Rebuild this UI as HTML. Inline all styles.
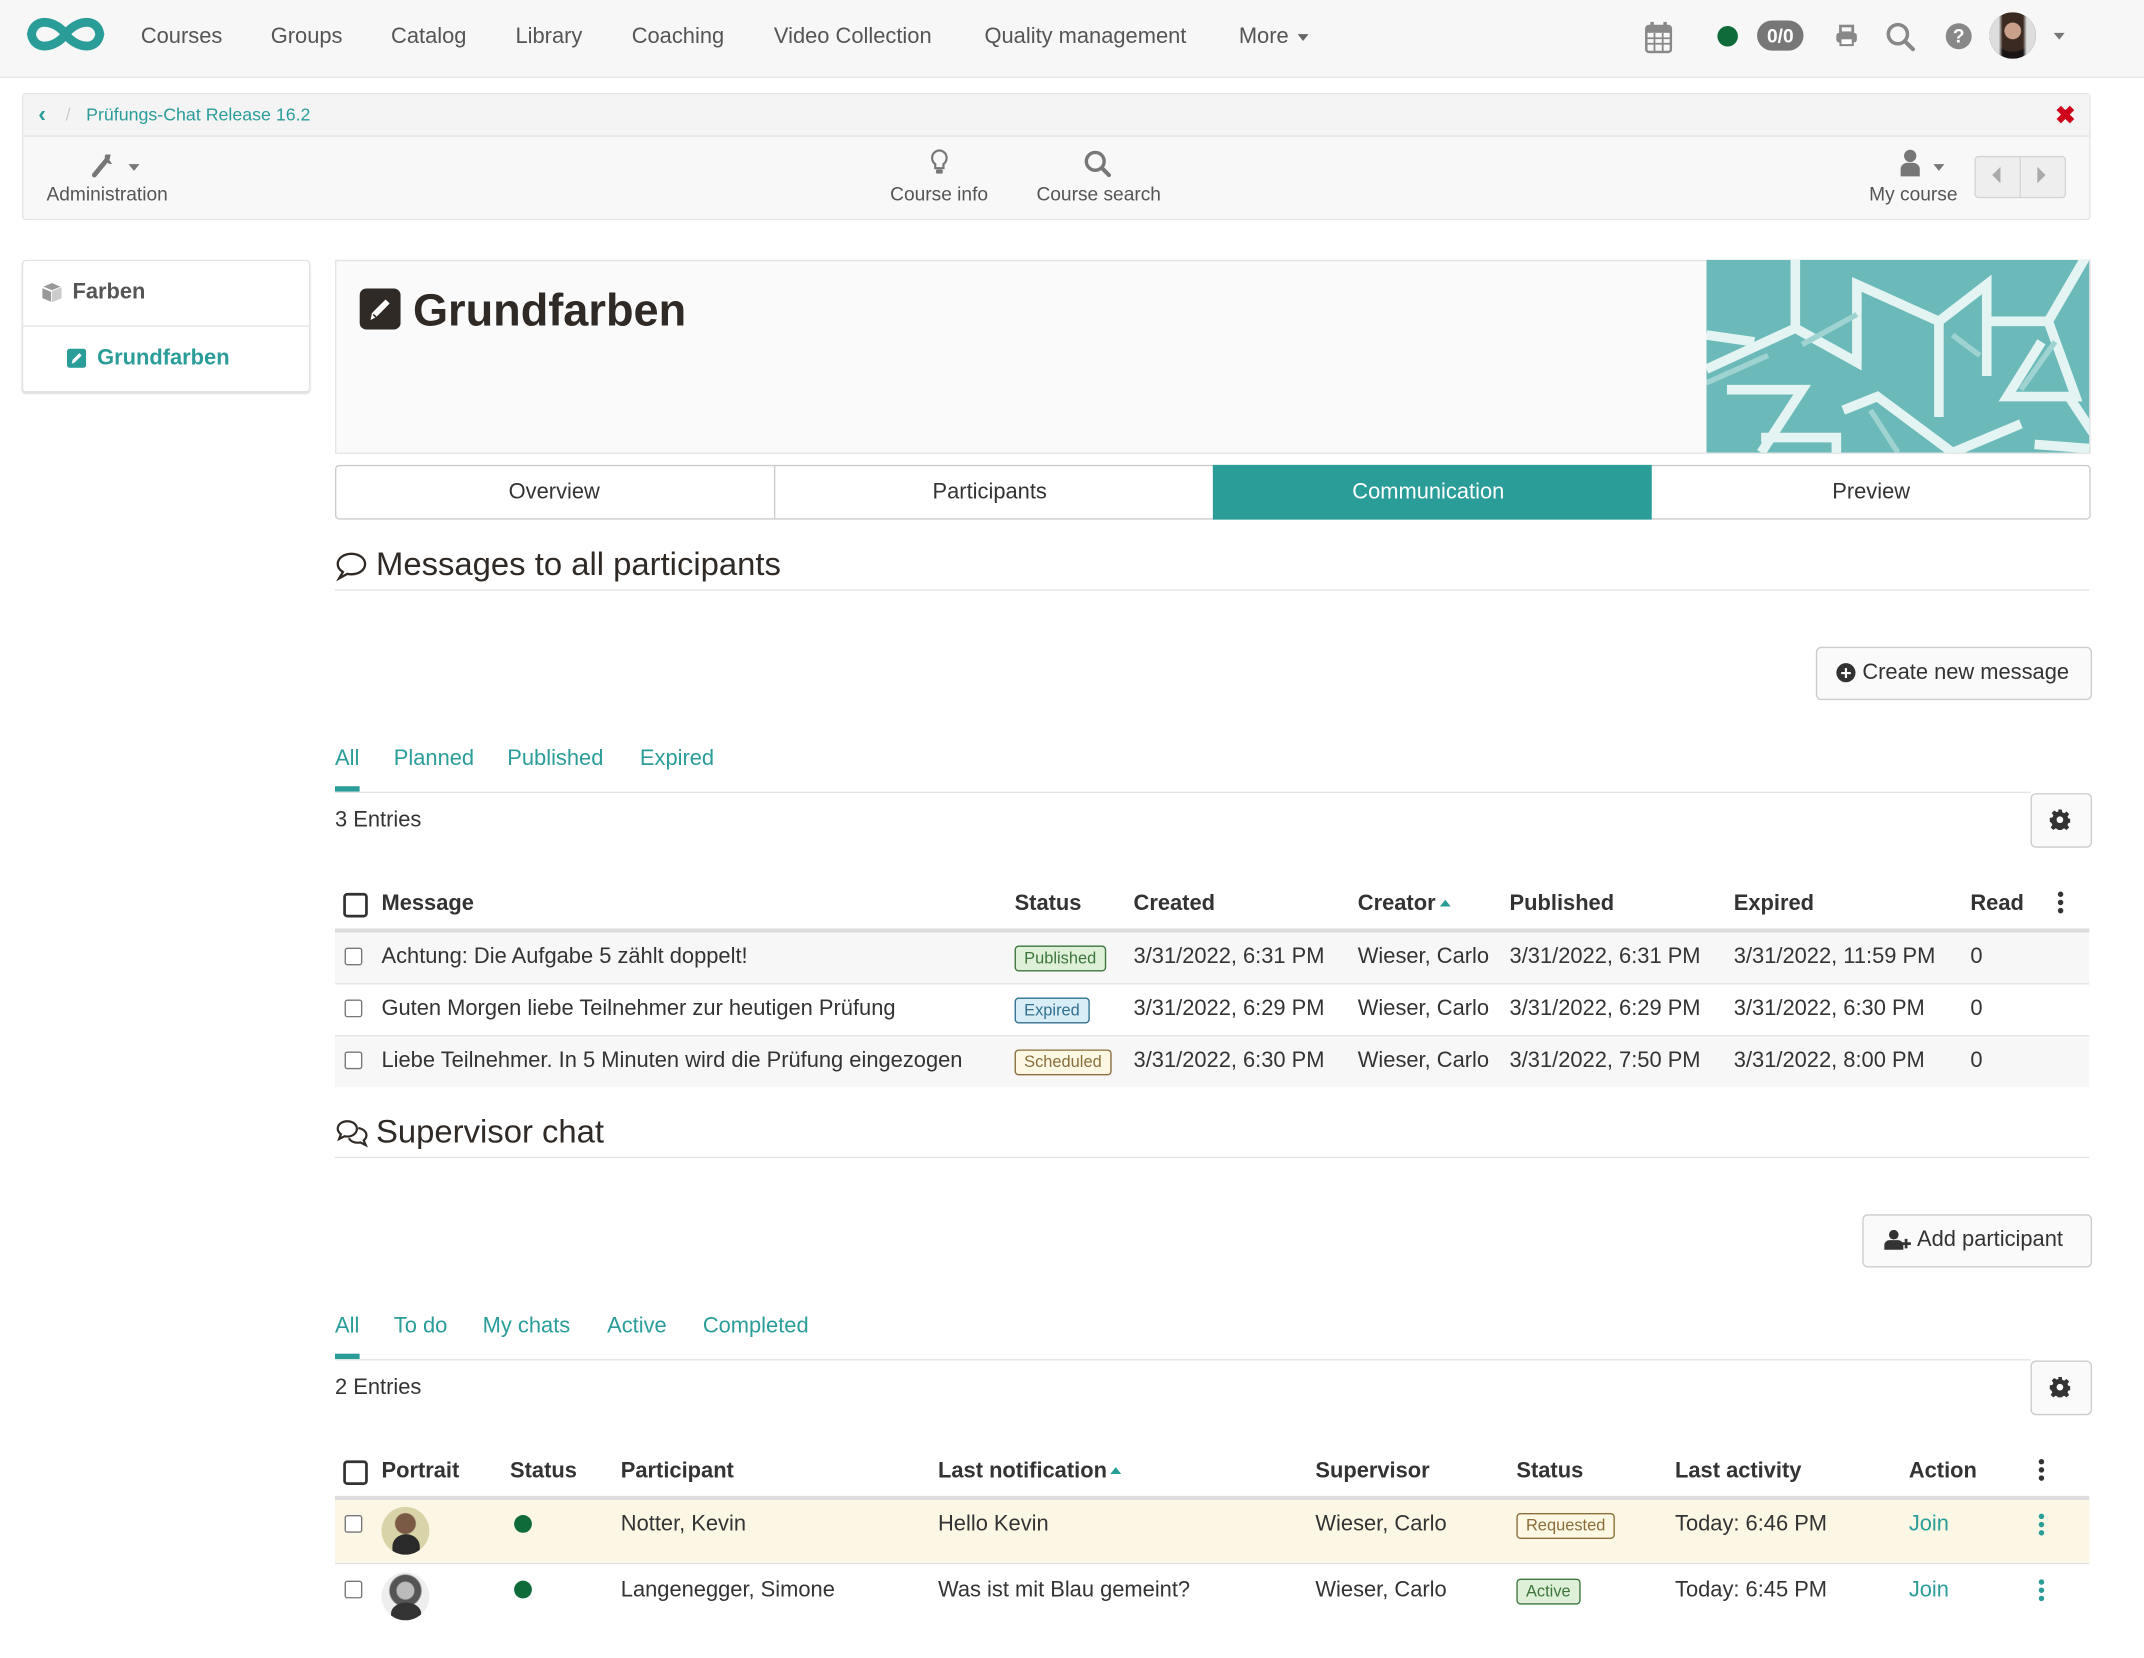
<!DOCTYPE html>
<html><head><meta charset="utf-8">
<style>
html,body{margin:0;padding:0;background:#fff;overflow:hidden}
body{width:2144px;height:1658px;position:relative}
#w{position:absolute;left:0;top:0;width:1568px;height:1213px;transform:scale(1.36735);transform-origin:0 0;font-family:"Liberation Sans",sans-serif;color:#333}
.a{position:absolute}
.t{position:absolute;transform:translateY(-50%);white-space:nowrap;line-height:1.2}
.nav{font-size:16px;color:#555}
.teal{color:#2a9d99}
.b{font-weight:bold}
.f16{font-size:16px}
.cb{position:absolute;width:11px;height:11px;border:1.5px solid #777;border-radius:2px;background:#fff}
.cbh{position:absolute;width:14px;height:14px;border:2px solid #333;border-radius:3px;background:#fff}
.lbl{position:absolute;font-size:12px;border:1px solid;border-radius:3px;padding:1px 6px;transform:translateY(-50%);line-height:15px}
.hr{position:absolute;height:1px;background:#e3e3e3}
.btn{position:absolute;border:1px solid #ccc;border-radius:4px;background:#fafafa}
</style></head><body><div id="w">

<!-- top bar -->
<div class="a" style="left:0;top:0;width:1568px;height:56px;background:#f7f7f7;border-bottom:1px solid #e5e5e5"></div>
<svg class="a" style="left:17px;top:9px" width="62" height="32" viewBox="0 0 62 32"><path d="M31 16 C24 6 8 3 6 16 C8 29 24 26 31 16 C38 6 54 3 56 16 C54 29 38 26 31 16Z" fill="none" stroke="#2a9d99" stroke-width="6.5"/></svg>
<span class="t nav" style="left:103px;top:27px">Courses</span>
<span class="t nav" style="left:198px;top:27px">Groups</span>
<span class="t nav" style="left:286px;top:27px">Catalog</span>
<span class="t nav" style="left:377px;top:27px">Library</span>
<span class="t nav" style="left:462px;top:27px">Coaching</span>
<span class="t nav" style="left:566px;top:27px">Video Collection</span>
<span class="t nav" style="left:720px;top:27px">Quality management</span>
<span class="t nav" style="left:906px;top:27px">More</span>
<div class="a" style="left:949px;top:25px;border:4.5px solid transparent;border-top:5px solid #666;border-bottom:0"></div>
<svg class="a" style="left:1203px;top:15px" width="20" height="24" viewBox="0 0 20 24"><rect x="1" y="4" width="18" height="19" rx="2" fill="none" stroke="#888" stroke-width="1.8"/><rect x="1" y="4" width="18" height="5" fill="#888"/><rect x="4" y="1" width="2.5" height="5" fill="#888"/><rect x="13.5" y="1" width="2.5" height="5" fill="#888"/><path d="M1 13H19M1 17H19M7 9V23M13 9V23" stroke="#888" stroke-width="1.3"/></svg>
<div class="a" style="left:1256px;top:19px;width:15px;height:15px;border-radius:50%;background:#0f6b3a"></div>
<div class="a" style="left:1285px;top:15px;width:34px;height:22px;border-radius:11px;background:#777;color:#fff;font-weight:bold;font-size:14px;text-align:center;line-height:22px">0/0</div>
<svg class="a" style="left:1342px;top:18px" width="17" height="16" viewBox="0 0 17 16"><rect x="4" y="1" width="9" height="5" fill="none" stroke="#888" stroke-width="2"/><rect x="1" y="6" width="15" height="7" rx="2" fill="#888"/><rect x="4" y="10" width="9" height="5" fill="#fff" stroke="#888" stroke-width="1.5"/></svg>
<svg class="a" style="left:1379px;top:16px" width="22" height="22" viewBox="0 0 22 22"><circle cx="9" cy="9" r="7" fill="none" stroke="#888" stroke-width="2.6"/><path d="M14 14L20 20" stroke="#888" stroke-width="3" stroke-linecap="round"/></svg>
<div class="a" style="left:1423px;top:17px;width:19px;height:19px;border-radius:50%;background:#888;color:#fff;font-weight:bold;font-size:14px;text-align:center;line-height:19px">?</div>
<div class="a" style="left:1455px;top:9px;width:34px;height:34px;border-radius:50%;background:radial-gradient(circle at 50% 40%,#c9a089 0 22%,#3a2a22 24% 55%,#1a1414 60%),#ddd;overflow:hidden"><div class="a" style="left:0;top:0;width:34px;height:34px;background:linear-gradient(90deg,#ddd 0 20%,transparent 28% 72%,#ddd 80%)"></div></div>
<div class="a" style="left:1502px;top:24px;border:4.5px solid transparent;border-top:5px solid #777;border-bottom:0"></div>

<!-- course toolbar -->
<div class="a" style="left:16px;top:68px;width:1511px;height:91px;border:1px solid #e5e5e5;border-radius:3px;background:#f8f8f8"></div>
<div class="a" style="left:17px;top:69px;width:1511px;height:30px;background:#f4f4f4;border-bottom:1px solid #e3e3e3"></div>
<span class="t teal b" style="left:28px;top:84px;font-size:17px">&#8249;</span>
<span class="t" style="left:48px;top:84px;font-size:13px;color:#ccc">/</span>
<span class="t teal" style="left:63px;top:84px;font-size:13px">Prüfungs-Chat Release 16.2</span>
<span class="t b" style="left:1503px;top:85px;font-size:18px;color:#d0021b">&#10006;</span>
<svg class="a" style="left:66px;top:109px" width="22" height="22" viewBox="0 0 22 22"><path d="M3 19L12 8" stroke="#777" stroke-width="3.5" stroke-linecap="round"/><path d="M11 4a5 5 0 0 0 5 7l-2-3 1-4z" fill="#777"/></svg>
<div class="a" style="left:94px;top:120px;border:4px solid transparent;border-top:5px solid #777;border-bottom:0"></div>
<span class="t" style="left:34px;top:142px;font-size:14px;color:#555">Administration</span>
<svg class="a" style="left:680px;top:109px" width="14" height="20" viewBox="0 0 14 20"><path d="M7 1a5.5 5.5 0 0 0-3 10v3h6v-3a5.5 5.5 0 0 0-3-10z" fill="none" stroke="#777" stroke-width="1.6"/><rect x="4.5" y="15" width="5" height="3" rx="1" fill="#777"/></svg>
<span class="t" style="left:651px;top:142px;font-size:14px;color:#555">Course info</span>
<svg class="a" style="left:792px;top:109px" width="22" height="22" viewBox="0 0 22 22"><circle cx="9" cy="9" r="6.5" fill="none" stroke="#777" stroke-width="2.5"/><path d="M14 14L19 19" stroke="#777" stroke-width="3" stroke-linecap="round"/></svg>
<span class="t" style="left:758px;top:142px;font-size:14px;color:#555">Course search</span>
<svg class="a" style="left:1388px;top:109px" width="18" height="22" viewBox="0 0 18 22"><circle cx="9" cy="5" r="4.5" fill="#777"/><path d="M2 20V14a5 5 0 0 1 5-4h4a5 5 0 0 1 5 4v6z" fill="#777"/></svg>
<div class="a" style="left:1414px;top:120px;border:4px solid transparent;border-top:5px solid #777;border-bottom:0"></div>
<span class="t" style="left:1367px;top:142px;font-size:14px;color:#555">My course</span>
<div class="a" style="left:1444px;top:114px;width:65px;height:29px;border:1px solid #d5d5d5;border-radius:3px;background:#eee"></div>
<div class="a" style="left:1477px;top:115px;width:1px;height:29px;background:#d5d5d5"></div>
<div class="a" style="left:1457px;top:122px;border:6px solid transparent;border-right:6px solid #aaa;border-left:0"></div>
<div class="a" style="left:1490px;top:122px;border:6px solid transparent;border-left:6px solid #aaa;border-right:0"></div>

<!-- left menu -->
<div class="a" style="left:16px;top:190px;width:209px;height:95px;border:1px solid #e3e3e3;border-radius:3px;box-shadow:0 1px 1px #ddd"></div>
<div class="hr" style="left:17px;top:238px;width:209px"></div>
<svg class="a" style="left:30px;top:206px" width="16" height="16" viewBox="0 0 16 16"><path d="M8 1L15 4V12L8 15L1 12V4Z" fill="#999"/><path d="M8 7V15M1 4L8 7L15 4" stroke="#fff" stroke-width="1.3" fill="none"/><path d="M8 7L15 4V12L8 15Z" fill="#ccc"/></svg>
<span class="t b" style="left:53px;top:214px;font-size:16px;color:#555">Farben</span>
<svg class="a" style="left:49px;top:255px" width="14" height="14" viewBox="0 0 14 14"><rect width="14" height="14" rx="2" fill="#2a9d99"/><path d="M3.5 11l.6-2.8L9 3.3l1.7 1.7-4.9 4.9z" fill="#fff"/></svg>
<span class="t b teal" style="left:71px;top:262px;font-size:16px">Grundfarben</span>

<!-- header -->
<div class="a" style="left:245px;top:190px;width:1282px;height:140px;border:1px solid #e5e5e5;background:#fafafa"></div>
<svg class="a" style="left:263px;top:211px" width="30" height="30" viewBox="0 0 30 30"><rect width="30" height="30" rx="5" fill="#2f2a26"/><path d="M8 23l1-5L19 8l3 3L12 21z" fill="#fff"/><path d="M10 19l2 2" stroke="#2f2a26" stroke-width="1.2"/></svg>
<span class="t b" style="left:302px;top:227px;font-size:33px;color:#2f2a26">Grundfarben</span>
<svg class="a" style="left:1248px;top:190px" width="280" height="141" viewBox="0 0 280 141"><rect width="280" height="141" fill="#6bbab9"/>
<g fill="none" stroke="#e4f4f3" stroke-width="7" stroke-linejoin="miter">
<path d="M65 0V50L0 80"/><path d="M65 50L110 75V18L170 45V115"/><path d="M170 45L205 18V85"/><path d="M205 45H250L282 -10"/><path d="M250 45L270 100H220L245 60"/><path d="M265 100L285 130"/><path d="M35 60L0 55"/><path d="M15 95H70L40 141"/><path d="M40 130H95V141"/><path d="M100 110L125 100L180 141"/><path d="M180 141L230 120"/><path d="M240 135L280 138"/></g>
<g fill="none" stroke="#9fd3d1" stroke-width="4"><path d="M70 62L110 40M180 55L200 70M120 110L140 141M255 60L230 95M0 90L45 70"/></g></svg>

<!-- tabs -->
<div class="a" style="left:245px;top:340px;width:1282px;height:38px;border:1px solid #ccc;border-radius:3px;background:#fff"></div>
<div class="a" style="left:566px;top:340px;width:1px;height:40px;background:#ccc"></div>
<div class="a" style="left:887px;top:340px;width:321px;height:40px;background:#2a9d99"></div>
<span class="t f16" style="left:372px;top:360px">Overview</span>
<span class="t f16" style="left:682px;top:360px">Participants</span>
<span class="t f16" style="left:989px;top:360px;color:#fff">Communication</span>
<span class="t f16" style="left:1340px;top:360px">Preview</span>

<!-- messages -->
<svg class="a" style="left:245px;top:403px" width="24" height="22" viewBox="0 0 24 22"><path d="M12 2C6 2 2 5.5 2 9.5c0 2.5 1.5 4.5 3.8 5.8L3 20l6-3.3c1 .2 2 .3 3 .3 6 0 10-3.5 10-7.5S18 2 12 2z" fill="none" stroke="#2f2a26" stroke-width="1.7"/></svg>
<span class="t" style="left:275px;top:414px;font-size:24px;color:#2f2a26">Messages to all participants</span>
<div class="hr" style="left:245px;top:431px;width:1283px"></div>
<div class="btn" style="left:1328px;top:473px;width:200px;height:37px"></div>
<div class="a" style="left:1343px;top:485px;width:14px;height:14px;border-radius:50%;background:#333;color:#fff;font-size:14px;font-weight:bold;text-align:center;line-height:14px">+</div>
<span class="t f16" style="left:1362px;top:492px">Create new message</span>

<span class="t f16 teal" style="left:245px;top:555px">All</span>
<span class="t f16 teal" style="left:288px;top:555px">Planned</span>
<span class="t f16 teal" style="left:371px;top:555px">Published</span>
<span class="t f16 teal" style="left:468px;top:555px">Expired</span>
<div class="a" style="left:245px;top:575px;width:18px;height:4px;background:#2a9d99"></div>
<div class="hr" style="left:245px;top:579px;width:1240px"></div>
<span class="t f16" style="left:245px;top:600px">3 Entries</span>
<div class="btn" style="left:1485px;top:580px;width:43px;height:38px"></div>
<svg class="a" style="left:1499px;top:592px" width="15" height="15" viewBox="0 0 16 16"><path d="M6.6 0h2.8l.4 2.2 1.5.7 1.9-1.3 2 2-1.3 1.9.7 1.5 2.2.4v2.8l-2.2.4-.7 1.5 1.3 1.9-2 2-1.9-1.3-1.5.7-.4 2.2H6.6l-.4-2.2-1.5-.7-1.9 1.3-2-2 1.3-1.9-.7-1.5L0 9.4V6.6l2.2-.4.7-1.5-1.3-1.9 2-2 1.9 1.3 1.5-.7z" fill="#333"/><circle cx="8" cy="8" r="2.6" fill="#fafafa"/></svg>

<div class="cbh" style="left:251px;top:653px"></div>
<span class="t f16 b" style="left:279px;top:661px">Message</span>
<span class="t f16 b" style="left:742px;top:661px">Status</span>
<span class="t f16 b" style="left:829px;top:661px">Created</span>
<span class="t f16 b" style="left:993px;top:661px">Creator</span>
<div class="a" style="left:1053px;top:658px;border:4.5px solid transparent;border-bottom:5px solid #2a9d99;border-top:0"></div>
<span class="t f16 b" style="left:1104px;top:661px">Published</span>
<span class="t f16 b" style="left:1268px;top:661px">Expired</span>
<span class="t f16 b" style="left:1441px;top:661px">Read</span>
<div class="a" style="left:1505px;top:652px;width:4px;height:4px;border-radius:50%;background:#333;box-shadow:0 6px 0 #333,0 12px 0 #333"></div>
<div class="a" style="left:245px;top:679px;width:1283px;height:3px;background:#ddd"></div>
<div class="a" style="left:245px;top:682px;width:1283px;height:37px;background:#f7f7f7"></div>
<div class="hr" style="left:245px;top:719px;width:1283px"></div>
<div class="hr" style="left:245px;top:757px;width:1283px"></div>
<div class="a" style="left:245px;top:758px;width:1283px;height:37px;background:#f7f7f7"></div>

<div class="cb" style="left:252px;top:693px"></div>
<span class="t f16" style="left:279px;top:700px">Achtung: Die Aufgabe 5 zählt doppelt!</span>
<span class="lbl" style="left:742px;top:701px;color:#3c763d;border-color:#3c763d;background:#dff0d8">Published</span>
<span class="t f16" style="left:829px;top:700px">3/31/2022, 6:31 PM</span>
<span class="t f16" style="left:993px;top:700px">Wieser, Carlo</span>
<span class="t f16" style="left:1104px;top:700px">3/31/2022, 6:31 PM</span>
<span class="t f16" style="left:1268px;top:700px">3/31/2022, 11:59 PM</span>
<span class="t f16" style="left:1441px;top:700px">0</span>

<div class="cb" style="left:252px;top:731px"></div>
<span class="t f16" style="left:279px;top:738px">Guten Morgen liebe Teilnehmer zur heutigen Prüfung</span>
<span class="lbl" style="left:742px;top:739px;color:#31708f;border-color:#31708f;background:#d9edf7">Expired</span>
<span class="t f16" style="left:829px;top:738px">3/31/2022, 6:29 PM</span>
<span class="t f16" style="left:993px;top:738px">Wieser, Carlo</span>
<span class="t f16" style="left:1104px;top:738px">3/31/2022, 6:29 PM</span>
<span class="t f16" style="left:1268px;top:738px">3/31/2022, 6:30 PM</span>
<span class="t f16" style="left:1441px;top:738px">0</span>

<div class="cb" style="left:252px;top:769px"></div>
<span class="t f16" style="left:279px;top:776px">Liebe Teilnehmer. In 5 Minuten wird die Prüfung eingezogen</span>
<span class="lbl" style="left:742px;top:777px;color:#8a6d3b;border-color:#8a6d3b;background:#fcf8e3">Scheduled</span>
<span class="t f16" style="left:829px;top:776px">3/31/2022, 6:30 PM</span>
<span class="t f16" style="left:993px;top:776px">Wieser, Carlo</span>
<span class="t f16" style="left:1104px;top:776px">3/31/2022, 7:50 PM</span>
<span class="t f16" style="left:1268px;top:776px">3/31/2022, 8:00 PM</span>
<span class="t f16" style="left:1441px;top:776px">0</span>

<!-- supervisor chat -->
<svg class="a" style="left:245px;top:818px" width="26" height="22" viewBox="0 0 26 22"><path d="M9 2C5 2 2 4.5 2 7.5c0 1.7 1 3 2.3 4L3 15l4-2c.7.1 1.3.2 2 .2 4 0 7-2.5 7-5.7S13 2 9 2z" fill="none" stroke="#2f2a26" stroke-width="1.6"/><path d="M17 7c3.5.5 6 2.7 6 5.3 0 1.5-.8 2.8-2 3.7l1.5 3.5-4-2c-.6.1-1.2.2-1.8.2-3 0-5.5-1.3-6.5-3.3" fill="none" stroke="#2f2a26" stroke-width="1.6"/></svg>
<span class="t" style="left:275px;top:829px;font-size:24px;color:#2f2a26">Supervisor chat</span>
<div class="hr" style="left:245px;top:846px;width:1283px"></div>
<div class="btn" style="left:1362px;top:888px;width:166px;height:37px"></div>
<svg class="a" style="left:1378px;top:899px" width="20" height="16" viewBox="0 0 20 16"><circle cx="7" cy="4" r="3.5" fill="#333"/><path d="M0 15v-3a4 4 0 0 1 4-4h6a4 4 0 0 1 4 4v3z" fill="#333"/><path d="M16 7v7M12.5 10.5h7" stroke="#333" stroke-width="2"/></svg>
<span class="t f16" style="left:1402px;top:907px">Add participant</span>

<span class="t f16 teal" style="left:245px;top:970px">All</span>
<span class="t f16 teal" style="left:288px;top:970px">To do</span>
<span class="t f16 teal" style="left:353px;top:970px">My chats</span>
<span class="t f16 teal" style="left:444px;top:970px">Active</span>
<span class="t f16 teal" style="left:514px;top:970px">Completed</span>
<div class="a" style="left:245px;top:990px;width:18px;height:4px;background:#2a9d99"></div>
<div class="hr" style="left:245px;top:994px;width:1240px"></div>
<span class="t f16" style="left:245px;top:1015px">2 Entries</span>
<div class="btn" style="left:1485px;top:995px;width:43px;height:38px"></div>
<svg class="a" style="left:1499px;top:1007px" width="15" height="15" viewBox="0 0 16 16"><path d="M6.6 0h2.8l.4 2.2 1.5.7 1.9-1.3 2 2-1.3 1.9.7 1.5 2.2.4v2.8l-2.2.4-.7 1.5 1.3 1.9-2 2-1.9-1.3-1.5.7-.4 2.2H6.6l-.4-2.2-1.5-.7-1.9 1.3-2-2 1.3-1.9-.7-1.5L0 9.4V6.6l2.2-.4.7-1.5-1.3-1.9 2-2 1.9 1.3 1.5-.7z" fill="#333"/><circle cx="8" cy="8" r="2.6" fill="#fafafa"/></svg>

<div class="cbh" style="left:251px;top:1068px"></div>
<span class="t f16 b" style="left:279px;top:1076px">Portrait</span>
<span class="t f16 b" style="left:373px;top:1076px">Status</span>
<span class="t f16 b" style="left:454px;top:1076px">Participant</span>
<span class="t f16 b" style="left:686px;top:1076px">Last notification</span>
<div class="a" style="left:812px;top:1073px;border:4.5px solid transparent;border-bottom:5px solid #2a9d99;border-top:0"></div>
<span class="t f16 b" style="left:962px;top:1076px">Supervisor</span>
<span class="t f16 b" style="left:1109px;top:1076px">Status</span>
<span class="t f16 b" style="left:1225px;top:1076px">Last activity</span>
<span class="t f16 b" style="left:1396px;top:1076px">Action</span>
<div class="a" style="left:1491px;top:1067px;width:4px;height:4px;border-radius:50%;background:#333;box-shadow:0 6px 0 #333,0 12px 0 #333"></div>
<div class="a" style="left:245px;top:1094px;width:1283px;height:3px;background:#ddd"></div>
<div class="a" style="left:245px;top:1097px;width:1283px;height:46px;background:#fcf7e5"></div>
<div class="hr" style="left:245px;top:1143px;width:1283px"></div>

<div class="cb" style="left:252px;top:1108px"></div>
<div class="a" style="left:279px;top:1102px;width:35px;height:35px;border-radius:50%;background:radial-gradient(circle at 50% 35%,#7a5a45 0 25%,#d9d3a8 28%),#ddd;overflow:hidden"><div class="a" style="left:8px;top:20px;width:20px;height:18px;border-radius:50% 50% 0 0;background:#2a2a2a"></div></div>
<div class="a" style="left:376px;top:1108px;width:13px;height:13px;border-radius:50%;background:#0f6b3a"></div>
<span class="t f16" style="left:454px;top:1115px">Notter, Kevin</span>
<span class="t f16" style="left:686px;top:1115px">Hello Kevin</span>
<span class="t f16" style="left:962px;top:1115px">Wieser, Carlo</span>
<span class="lbl" style="left:1109px;top:1116px;color:#8a6d3b;border-color:#8a6d3b;background:#fcf8e3">Requested</span>
<span class="t f16" style="left:1225px;top:1115px">Today: 6:46 PM</span>
<span class="t f16 teal" style="left:1396px;top:1115px">Join</span>
<div class="a" style="left:1491px;top:1107px;width:4px;height:4px;border-radius:50%;background:#2a9d99;box-shadow:0 6px 0 #2a9d99,0 12px 0 #2a9d99"></div>

<div class="cb" style="left:252px;top:1156px"></div>
<div class="a" style="left:279px;top:1150px;width:35px;height:35px;border-radius:50%;background:radial-gradient(circle at 50% 38%,#bbb 0 22%,#555 25% 40%,#eee 44%),#eee;overflow:hidden"><div class="a" style="left:7px;top:22px;width:22px;height:16px;border-radius:50% 50% 0 0;background:#333"></div></div>
<div class="a" style="left:376px;top:1156px;width:13px;height:13px;border-radius:50%;background:#0f6b3a"></div>
<span class="t f16" style="left:454px;top:1163px">Langenegger, Simone</span>
<span class="t f16" style="left:686px;top:1163px">Was ist mit Blau gemeint?</span>
<span class="t f16" style="left:962px;top:1163px">Wieser, Carlo</span>
<span class="lbl" style="left:1109px;top:1164px;color:#3c763d;border-color:#3c763d;background:#dff0d8">Active</span>
<span class="t f16" style="left:1225px;top:1163px">Today: 6:45 PM</span>
<span class="t f16 teal" style="left:1396px;top:1163px">Join</span>
<div class="a" style="left:1491px;top:1155px;width:4px;height:4px;border-radius:50%;background:#2a9d99;box-shadow:0 6px 0 #2a9d99,0 12px 0 #2a9d99"></div>

</div></body></html>
